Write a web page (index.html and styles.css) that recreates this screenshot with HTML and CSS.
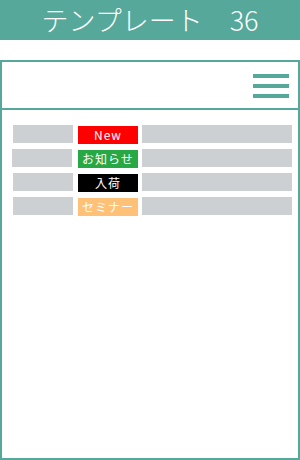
FILE: index.html
```html
<!DOCTYPE html>
<html lang="ja">

<head>
    <meta charset="UTF-8">
    <meta name="viewport" content="width=device-width, initial-scale=1.0">
    <title>テンプレート 36</title>
    <link rel="stylesheet" href="styles.css">
</head>

<body>
    <h1 class="titulo">テンプレート　36</h1>

    <div class="marco">
        <div class="cabecera">
            <div class="menu">
                <span></span>
                <span></span>
                <span></span>
            </div>
        </div>

        <ul class="noticias">
            <li class="fila">
                <span class="fecha"></span>
                <span class="etiqueta nuevo">New</span>
                <span class="texto"></span>
            </li>
            <li class="fila">
                <span class="fecha corrida"></span>
                <span class="etiqueta aviso">お知らせ</span>
                <span class="texto"></span>
            </li>
            <li class="fila">
                <span class="fecha"></span>
                <span class="etiqueta llegada">入荷</span>
                <span class="texto"></span>
            </li>
            <li class="fila">
                <span class="fecha"></span>
                <span class="etiqueta seminario">セミナー</span>
                <span class="texto"></span>
            </li>
        </ul>
    </div>
</body>

</html>
```

FILE: styles.css
```css
body {
    margin: 0;
    padding: 0;
    font-family: "Noto Sans CJK JP", "Noto Sans", sans-serif;
    background-color: #fff;
}

.titulo {
    margin: 0 0 20px 0;
    height: 40px;
    line-height: 40px;
    background-color: #56a89a;
    color: #fff;
    font-size: 27px;
    font-weight: 300;
    text-align: center;
}

.marco {
    box-sizing: border-box;
    height: 400px;
    border: 2px solid #56a89a;
}

.cabecera {
    height: 46px;
    border-bottom: 2px solid #56a89a;
    display: flex;
    justify-content: flex-end;
    align-items: center;
    padding-right: 9px;
}

.menu {
    width: 36px;
    display: flex;
    flex-direction: column;
    gap: 6px;
    margin-top: 2px;
}

.menu span {
    display: block;
    height: 4px;
    background-color: #56a89a;
}

.noticias {
    list-style: none;
    margin: 0;
    padding: 15px 6px 0 11px;
    display: flex;
    flex-direction: column;
    gap: 6px;
}

.fila {
    display: flex;
    align-items: flex-start;
    height: 18px;
}

.fecha {
    width: 60px;
    height: 18px;
    background-color: #cdd0d3;
}

/* la segunda fila esta un pixel a la izquierda */
.fecha.corrida {
    margin-left: -1px;
    margin-right: 1px;
}

.etiqueta {
    width: 60px;
    height: 18px;
    margin: 1px 4px 0 5px;
    color: #fff;
    font-size: 12px;
    letter-spacing: 1px;
    line-height: 18px;
    text-align: center;
}

.nuevo {
    background-color: #ff0000;
}

.aviso {
    background-color: #28a745;
}

.llegada {
    background-color: #000;
}

.seminario {
    background-color: #ffc078;
}

.texto {
    width: 150px;
    height: 18px;
    background-color: #cdd0d3;
}
```
